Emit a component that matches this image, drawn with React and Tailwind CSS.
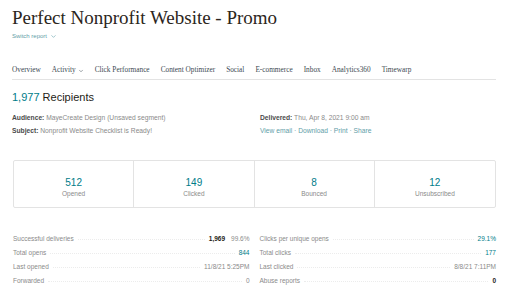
import { ChevronDown } from 'lucide-react'

const navItems = [
  { label: 'Overview' },
  { label: 'Activity', caret: true },
  { label: 'Click Performance' },
  { label: 'Content Optimizer' },
  { label: 'Social' },
  { label: 'E-commerce' },
  { label: 'Inbox' },
  { label: 'Analytics360' },
  { label: 'Timewarp' },
]

const boxes = [
  { value: '512', label: 'Opened' },
  { value: '149', label: 'Clicked' },
  { value: '8', label: 'Bounced' },
  { value: '12', label: 'Unsubscribed' },
]

const leftStats = [
  { label: 'Successful deliveries', value: '1,969', extra: '99.6%', tone: 'dark' },
  { label: 'Total opens', value: '844', tone: 'teal' },
  { label: 'Last opened', value: '11/8/21 5:25PM', tone: 'gray' },
  { label: 'Forwarded', value: '0', tone: 'gray' },
]

const rightStats = [
  { label: 'Clicks per unique opens', value: '29.1%', tone: 'teal' },
  { label: 'Total clicks', value: '177', tone: 'teal' },
  { label: 'Last clicked', value: '8/8/21 7:11PM', tone: 'gray' },
  { label: 'Abuse reports', value: '0', tone: 'dark' },
]

const toneClass = {
  teal: 'text-[#007c89]',
  gray: 'text-[#8a8a8a]',
  dark: 'text-[#241c15] font-semibold',
}

function StatRow({ label, value, extra, tone }) {
  return (
    <div className="flex items-baseline h-[14px] text-[6.5px]">
      <span className="text-[#8a8a8a] whitespace-nowrap">{label}</span>
      <span className="flex-1 mx-[4px] border-b border-dotted border-[#ececec] translate-y-[-1px]" />
      <span className={`whitespace-nowrap ${toneClass[tone]}`}>{value}</span>
      {extra && <span className="ml-[6px] text-[#8a8a8a]">{extra}</span>}
    </div>
  )
}

export default function App() {
  return (
    <div className="w-[512px] h-[299px] bg-white overflow-hidden pl-[12px] pr-[16px] font-['Liberation_Sans',Arial,sans-serif] text-[#241c15]">
      {/* Header */}
      <h1 className="pt-[6px] text-[19px] leading-[24px] font-['Liberation_Serif',Georgia,serif] text-[#2b2520]">
        Perfect Nonprofit Website - Promo
      </h1>
      <div className="mt-[2px] flex items-center gap-[3px] text-[6px] text-[#5f9ea8]">
        Switch report <ChevronDown size={7} strokeWidth={2} />
      </div>

      {/* Tabs */}
      <nav className="mt-[24px] flex items-center h-[15px] border-b border-[#e3e3e3] pb-[3px] font-['Liberation_Serif',Georgia,serif] text-[7.3px] text-[#3d4a52]">
        {navItems.map((n, i) => (
          <span key={i} className="flex items-center gap-[2px] mr-[11px] whitespace-nowrap">
            {n.label}
            {n.caret && <ChevronDown size={6} strokeWidth={2} />}
          </span>
        ))}
      </nav>

      {/* Summary */}
      <div className="mt-[10px] text-[11px] leading-[14px]">
        <span className="text-[#007c89]">1,977</span> Recipients
      </div>
      <div className="mt-[10px] grid grid-cols-2 text-[6.7px] leading-[7px]">
        <div className="space-y-[6px]">
          <div><span className="font-semibold text-[#4a4a4a]">Audience:</span> <span className="text-[#8a8a8a]">MayeCreate Design (Unsaved segment)</span></div>
          <div><span className="font-semibold text-[#4a4a4a]">Subject:</span> <span className="text-[#8a8a8a]">Nonprofit Website Checklist is Ready!</span></div>
        </div>
        <div className="pl-[6px] space-y-[6px]">
          <div><span className="font-semibold text-[#4a4a4a]">Delivered:</span> <span className="text-[#8a8a8a]">Thu, Apr 8, 2021 9:00 am</span></div>
          <div className="text-[#5f9ea8]">View email · Download · Print · Share</div>
        </div>
      </div>

      {/* Boxes */}
      <div className="mt-[26px] ml-[1px] h-[48px] grid grid-cols-4 border border-[#e3e3e3] rounded-[2px]">
        {boxes.map((b, i) => (
          <div key={i} className={`pt-[7px] flex flex-col items-center justify-center ${i < 3 ? 'border-r border-[#e3e3e3]' : ''}`}>
            <div className="text-[10px] leading-[12px] text-[#007c89]">{b.value}</div>
            <div className="text-[6.5px] text-[#8a8a8a]">{b.label}</div>
          </div>
        ))}
      </div>

      {/* Stats list */}
      <div className="mt-[26px] ml-[1px] grid grid-cols-2 gap-x-[10px]">
        <div>
          {leftStats.map((s, i) => <StatRow key={i} {...s} />)}
        </div>
        <div>
          {rightStats.map((s, i) => <StatRow key={i} {...s} />)}
        </div>
      </div>
    </div>
  )
}
